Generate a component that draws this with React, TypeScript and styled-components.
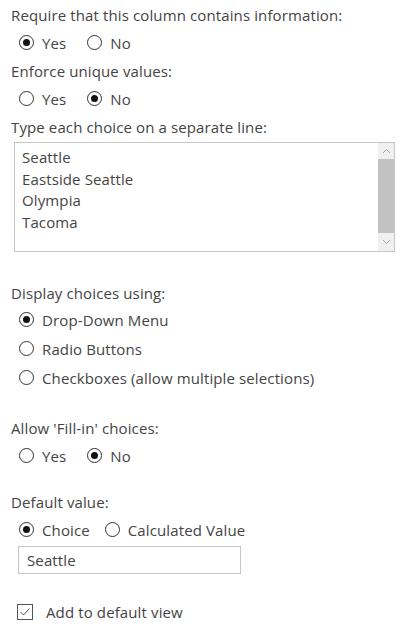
import React from "react";
import styled, { createGlobalStyle } from "styled-components";

const Global = createGlobalStyle`
  html, body { margin: 0; padding: 0; background: #ffffff; }
  body { font-family: "Open Sans", "Noto Sans", sans-serif; color: #444444; letter-spacing: 0.12px; }
`;

const Page = styled.div`
  display: flex;
  flex-direction: column;
  padding: 4px 0 0 11px;
  width: 410px;
  box-sizing: border-box;
`;

const Section = styled.div<{ $top?: number }>`
  display: flex;
  flex-direction: column;
  margin-top: ${(p) => p.$top ?? 0}px;
`;

const Label = styled.div<{ $below?: number }>`
  font-size: 15px;
  line-height: 22px;
  height: 22px;
  margin-bottom: ${(p) => p.$below ?? 2}px;
  white-space: nowrap;
`;

const RadioRow = styled.div<{ $gap?: number }>`
  display: flex;
  align-items: center;
  gap: ${(p) => p.$gap ?? 21}px;
  padding-left: 8px;
  height: 29px;
`;

const RadioItem = styled.label`
  display: flex;
  align-items: center;
  gap: 8px;
  font-size: 15px;
  line-height: 20px;
  white-space: nowrap;
`;

const Circle = styled.span<{ $on?: boolean }>`
  width: 15px;
  height: 15px;
  box-sizing: border-box;
  border: 1px solid #333333;
  border-radius: 50%;
  display: flex;
  align-items: center;
  justify-content: center;
  &::after {
    content: "";
    width: 7px;
    height: 7px;
    border-radius: 50%;
    background: #111111;
    display: ${(p) => (p.$on ? "block" : "none")};
  }
`;

const Column = styled.div`
  display: flex;
  flex-direction: column;
`;

const ListBox = styled.div`
  margin: 2px 0 0 3px;
  width: 381px;
  height: 110px;
  box-sizing: border-box;
  border: 1px solid #c6c6c6;
  display: flex;
  background: #fff;
`;

const ListText = styled.div`
  flex: 1;
  padding: 4px 0 0 7px;
  font-size: 15px;
  line-height: 21.5px;
  color: #444444;
`;

const ScrollBar = styled.div`
  width: 16px;
  display: flex;
  flex-direction: column;
  background: #f0f0f0;
`;

const ScrollButton = styled.div<{ $h: number }>`
  height: ${(p) => p.$h}px;
  display: flex;
  align-items: center;
  justify-content: center;
  background: #f0f0f0;
`;

const Thumb = styled.div`
  flex: 1;
  background: #c2c2c2;
`;

const TextInput = styled.div`
  margin: 2px 0 0 7px;
  width: 223px;
  height: 28px;
  box-sizing: border-box;
  border: 1px solid #c6c6c6;
  padding: 0 0 0 8px;
  display: flex;
  align-items: center;
  font-size: 15px;
  color: #444444;
`;

const CheckRow = styled.div`
  display: flex;
  align-items: center;
  gap: 13px;
  padding-left: 6px;
  margin-top: 28px;
  height: 20px;
  font-size: 15px;
  line-height: 20px;
`;

const CheckBox = styled.span`
  width: 16px;
  height: 16px;
  box-sizing: border-box;
  border: 1px solid #555555;
  display: flex;
  align-items: center;
  justify-content: center;
`;

const Chevron = ({ up }: { up?: boolean }) => (
  <svg width="9" height="6" viewBox="0 0 9 6">
    <path
      d={up ? "M1 5 L4.5 1.5 L8 5" : "M1 1 L4.5 4.5 L8 1"}
      fill="none"
      stroke="#a6a6a6"
      strokeWidth="1"
    />
  </svg>
);

const Radio = ({ on, children }: { on?: boolean; children: React.ReactNode }) => (
  <RadioItem>
    <Circle $on={on} />
    {children}
  </RadioItem>
);

export default function App() {
  return (
    <>
      <Global />
      <Page>
        <Section>
          <Label>Require that this column contains information:</Label>
          <RadioRow>
            <Radio on>Yes</Radio>
            <Radio>No</Radio>
          </RadioRow>
        </Section>
        <Section $top={3}>
          <Label>Enforce unique values:</Label>
          <RadioRow>
            <Radio>Yes</Radio>
            <Radio on>No</Radio>
          </RadioRow>
        </Section>
        <Section $top={3}>
          <Label>Type each choice on a separate line:</Label>
          <ListBox>
            <ListText>
              <div>Seattle</div>
              <div>Eastside Seattle</div>
              <div>Olympia</div>
              <div>Tacoma</div>
            </ListText>
            <ScrollBar>
              <ScrollButton $h={16}>
                <Chevron up />
              </ScrollButton>
              <Thumb />
              <ScrollButton $h={18}>
                <Chevron />
              </ScrollButton>
            </ScrollBar>
          </ListBox>
        </Section>
        <Section $top={30}>
          <Label $below={1}>Display choices using:</Label>
          <Column>
            <RadioRow>
              <Radio on>Drop-Down Menu</Radio>
            </RadioRow>
            <RadioRow>
              <Radio>Radio Buttons</Radio>
            </RadioRow>
            <RadioRow>
              <Radio>Checkboxes (allow multiple selections)</Radio>
            </RadioRow>
          </Column>
        </Section>
        <Section $top={25}>
          <Label>Allow 'Fill-in' choices:</Label>
          <RadioRow>
            <Radio>Yes</Radio>
            <Radio on>No</Radio>
          </RadioRow>
        </Section>
        <Section $top={21}>
          <Label>Default value:</Label>
          <RadioRow $gap={15}>
            <Radio on>Choice</Radio>
            <Radio>Calculated Value</Radio>
          </RadioRow>
          <TextInput>Seattle</TextInput>
        </Section>
        <CheckRow>
          <CheckBox>
            <svg width="12" height="10" viewBox="0 0 12 10">
              <path d="M1.5 5 L4.5 8 L10.5 1.5" fill="none" stroke="#555" strokeWidth="1" />
            </svg>
          </CheckBox>
          Add to default view
        </CheckRow>
      </Page>
    </>
  );
}
